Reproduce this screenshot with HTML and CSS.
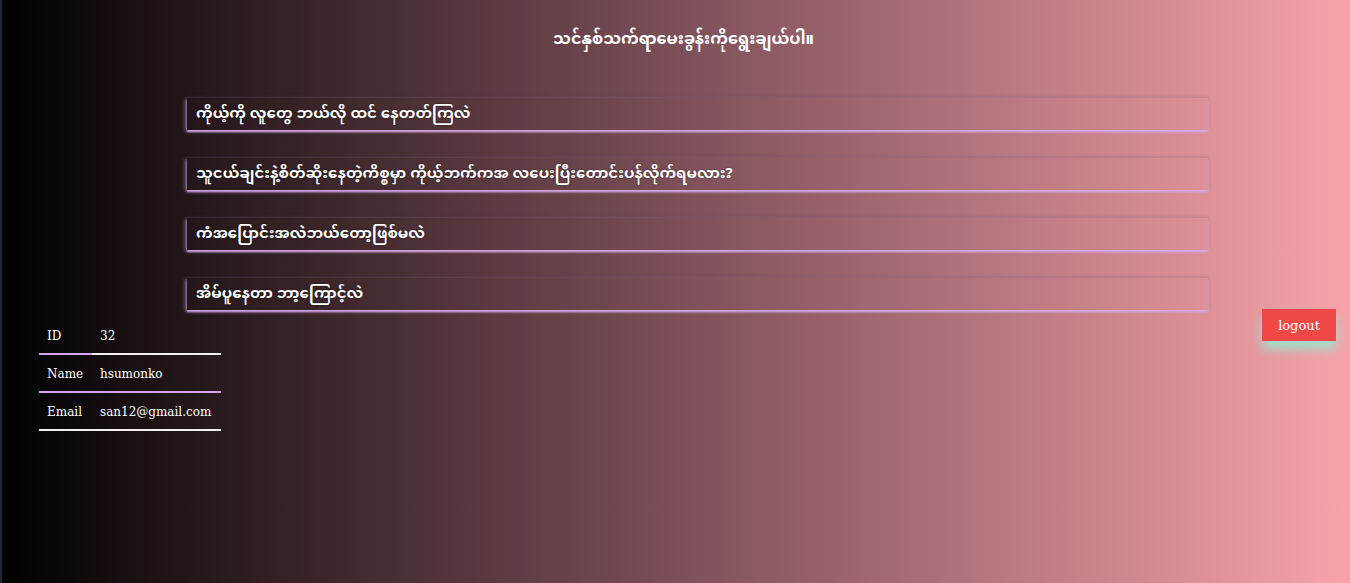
FILE: index.html
```html
<!DOCTYPE html>
<html>
<head>
<meta charset="utf-8">
<link rel="stylesheet" href="styles.css">
</head>
<body>
<div class="page">
  <h1 class="title">သင်နှစ်သက်ရာမေးခွန်းကိုရွေးချယ်ပါ။</h1>
  <div class="questions">
    <div class="q">ကိုယ့်ကို လူတွေ ဘယ်လို ထင် နေတတ်ကြလဲ</div>
    <div class="q">သူငယ်ချင်းနဲ့စိတ်ဆိုးနေတဲ့ကိစ္စမှာ ကိုယ့်ဘက်ကအ လပေးပြီးတောင်းပန်လိုက်ရမလား?</div>
    <div class="q">ကံအပြောင်းအလဲဘယ်တော့ဖြစ်မလဲ</div>
    <div class="q">အိမ်ပူနေတာ ဘာ့ကြောင့်လဲ</div>
  </div>
  <div class="bottom">
    <table class="info">
      <tr class="r1"><td class="k">ID</td><td>32</td></tr>
      <tr class="r2"><td class="k">Name</td><td>hsumonko</td></tr>
      <tr class="r3"><td class="k">Email</td><td>san12@gmail.com</td></tr>
    </table>
    <button class="logout">logout</button>
  </div>
</div>
</body>
</html>
```
FILE: styles.css
```css
html, body {
  margin: 0;
  padding: 0;
  height: 100%;
}
body {
  background: linear-gradient(to right, #000000 0%, #7c4f58 50%, #f8a3aa 100%);
  border-left: 2px solid #1b2733;
  box-sizing: border-box;
  color: #fff;
  font-family: "Noto Sans Myanmar", "Noto Sans", "DejaVu Sans", sans-serif;
}
.page {
  padding-top: 28px;
}
.title {
  margin: 0;
  font-size: 16px;
  font-weight: bold;
  text-align: center;
  line-height: 26px;
  padding-left: 15px;
}
.questions {
  display: flex;
  flex-direction: column;
  gap: 28px;
  margin: 44px 0 0 185px;
  width: 1021px;
}
.q {
  height: 30px;
  padding-top: 2px;
  line-height: 30px;
  padding-left: 9px;
  font-size: 15px;
  font-weight: bold;
  box-shadow: 0 2px 2px #d7aaea, -2px 1px 4px rgba(210, 170, 230, 0.5), 0 -1px 3px rgba(0,0,0,0.15);
  text-shadow: 0 0 2px rgba(0,0,0,0.5);
}
.bottom {
  display: flex;
  justify-content: space-between;
  align-items: flex-start;
  padding: 0 14px 0 37px;
}
.info {
  border-collapse: collapse;
  margin-top: 7px;
  font-family: "DejaVu Serif", "Liberation Serif", serif;
  font-size: 12px;
  width: 182px;
}
.info td {
  height: 34px;
  padding: 2px 0 0 8px;
  vertical-align: middle;
  border-bottom: 2px solid #f2eef2;
  white-space: nowrap;
}
.info td.k {
  width: 45px;
}
.r1 td.k { border-bottom-color: #d3a6f2; }
.r2 td { border-bottom-color: #d3a6f2; }
.logout {
  margin-top: -1px;
  width: 74px;
  height: 32px;
  border: none;
  background: #f04747;
  color: #fff;
  font-family: "DejaVu Serif", "Liberation Serif", serif;
  font-size: 13px;
  box-shadow: 0 8px 12px rgba(150, 235, 210, 0.9);
}
```
